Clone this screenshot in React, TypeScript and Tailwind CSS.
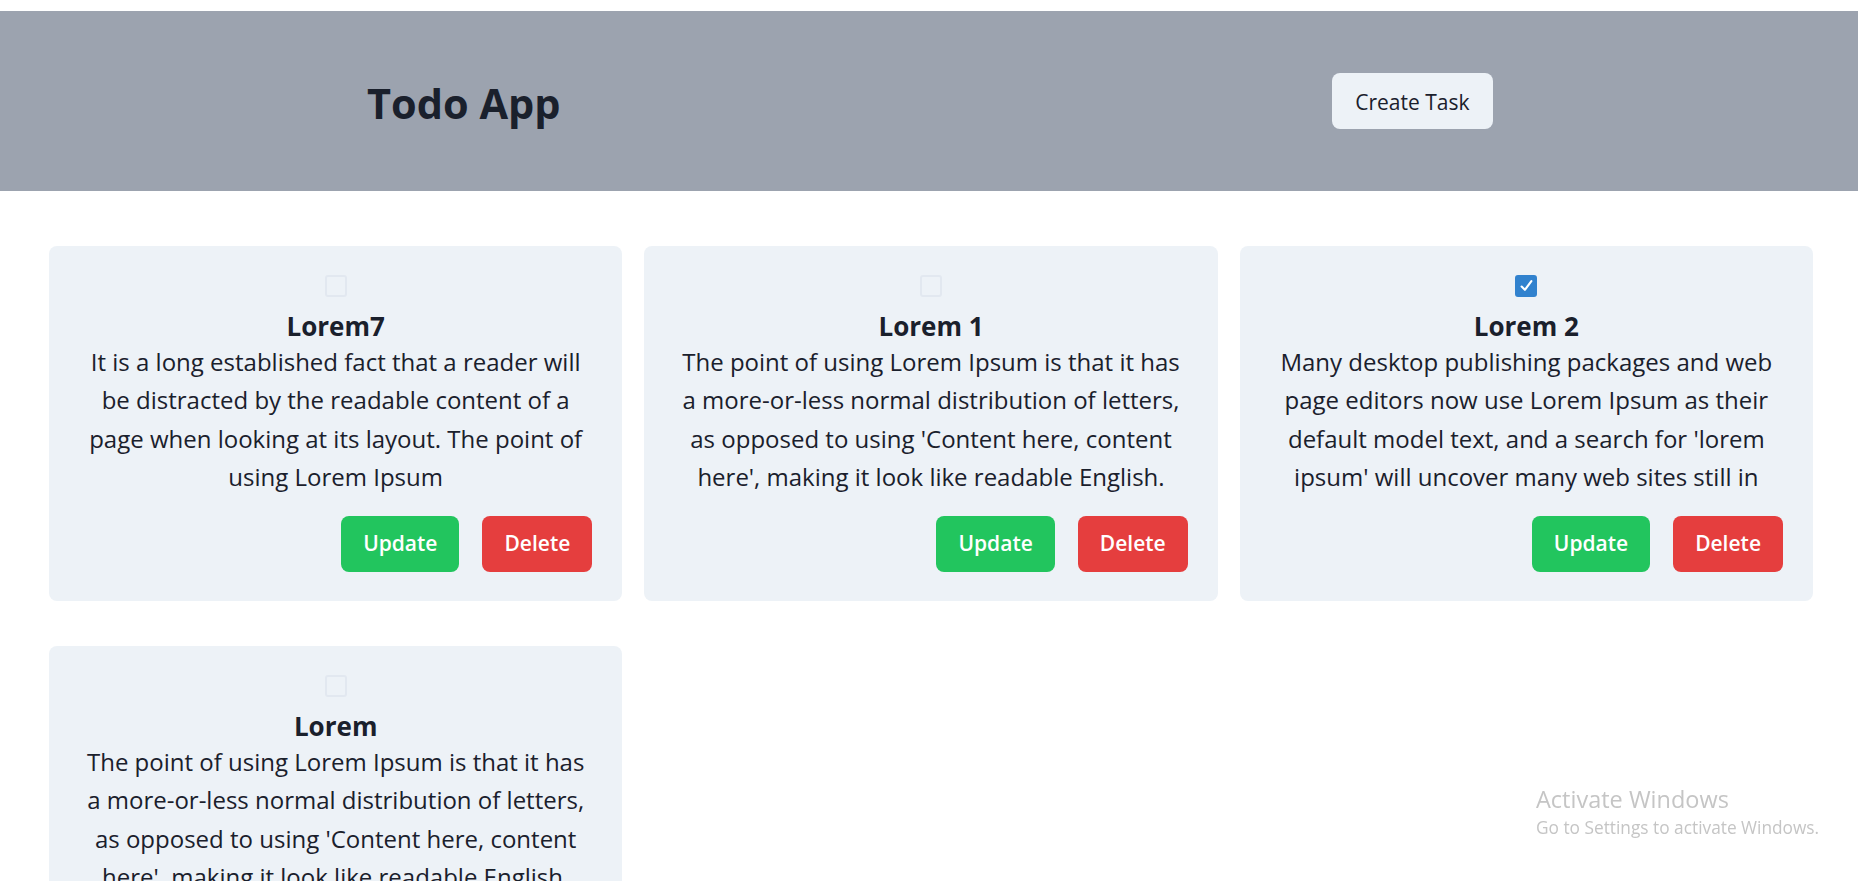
import { useState } from 'react';

interface Task {
  id: number;
  title: string;
  description: string;
  done: boolean;
}

const TASKS: Task[] = [
  {
    id: 7,
    title: 'Lorem7',
    description:
      'It is a long established fact that a reader will be distracted by the readable content of a page when looking at its layout. The point of using Lorem Ipsum',
    done: false
  },
  {
    id: 1,
    title: 'Lorem 1',
    description:
      "The point of using Lorem Ipsum is that it has a more-or-less normal distribution of letters, as opposed to using 'Content here, content here', making it look like readable English.",
    done: false
  },
  {
    id: 2,
    title: 'Lorem 2',
    description:
      "Many desktop publishing packages and web page editors now use Lorem Ipsum as their default model text, and a search for 'lorem ipsum' will uncover many web sites still in their infancy.",
    done: true
  },
  {
    id: 3,
    title: 'Lorem',
    description:
      "The point of using Lorem Ipsum is that it has a more-or-less normal distribution of letters, as opposed to using 'Content here, content here', making it look like readable English.",
    done: false
  }
];

function Checkbox({ checked, onChange }: { checked: boolean; onChange: () => void }) {
  return (
    <span className="relative inline-flex w-[22px] h-[22px]">
      <input
        type="checkbox"
        checked={checked}
        onChange={onChange}
        className="appearance-none w-[22px] h-[22px] rounded-[3px] border-2 border-[#e2e8f0] bg-transparent checked:bg-[#3182ce] checked:border-[#3182ce] cursor-pointer"
      />
      {checked && (
        <svg
          viewBox="0 0 12 10"
          className="absolute left-[4.5px] top-[5px] w-[13px] h-[11px] pointer-events-none"
          fill="none"
          stroke="white"
          strokeWidth={2}
          strokeLinecap="round"
          strokeLinejoin="round"
        >
          <polyline points="1.5 6 4.5 9 10.5 1" />
        </svg>
      )}
    </span>
  );
}

function TaskCard({ task, onToggle }: { task: Task; onToggle: () => void }) {
  return (
    <div className="bg-[#edf2f7] rounded-lg px-[30px] pt-[29px] pb-[29px] flex flex-col items-center text-center">
      <Checkbox checked={task.done} onChange={onToggle} />
      <h2 className="mt-[12px] text-[26px] leading-[34px] font-bold text-[#1a202c]">{task.title}</h2>
      <p className="text-[24px] leading-[38.3px] h-[153px] overflow-hidden text-[#1a202c]">{task.description}</p>
      <div className="mt-5 self-stretch flex justify-end gap-[23px]">
        <button className="h-[56px] px-[22px] rounded-lg bg-[#22c55e] text-white text-[21px] font-semibold">
          Update
        </button>
        <button className="h-[56px] px-[22px] rounded-lg bg-[#e53e3e] text-white text-[21px] font-semibold">
          Delete
        </button>
      </div>
    </div>
  );
}

export default function App() {
  const [tasks, setTasks] = useState(TASKS);

  const toggle = (id: number) =>
    setTasks(prev => prev.map(t => (t.id === id ? { ...t, done: !t.done } : t)));

  return (
    <div className="h-screen overflow-y-auto [scrollbar-width:none] bg-white font-['Open_Sans','Noto_Sans',sans-serif] text-[#1a202c]">
      {/* header */}
      <header className="mt-[11px] h-[180px] bg-[#9ca3af] flex items-center justify-between pl-[367px] pr-[365px]">
        <h1 className="mt-[5px] text-[41.5px] leading-none font-bold">Todo App</h1>
        <button className="h-[56px] px-[23.5px] pt-[4px] rounded-lg bg-[#edf2f7] text-[21px] font-medium">
          Create Task
        </button>
      </header>

      {/* tasks */}
      <main className="pt-[55px] pb-10 pl-[49px] pr-[45px] grid grid-cols-3 gap-x-[22px] gap-y-[45px]">
        {tasks.map(task => (
          <TaskCard key={task.id} task={task} onToggle={() => toggle(task.id)} />
        ))}
      </main>

      {/* windows watermark */}
      <div className="fixed left-[1536px] top-[784px] text-[#c5c5c5] pointer-events-none">
        <div className="text-[23.5px] leading-[30px]">Activate Windows</div>
        <div className="mt-[3px] text-[17.3px] leading-[22px]">Go to Settings to activate Windows.</div>
      </div>
    </div>
  );
}
